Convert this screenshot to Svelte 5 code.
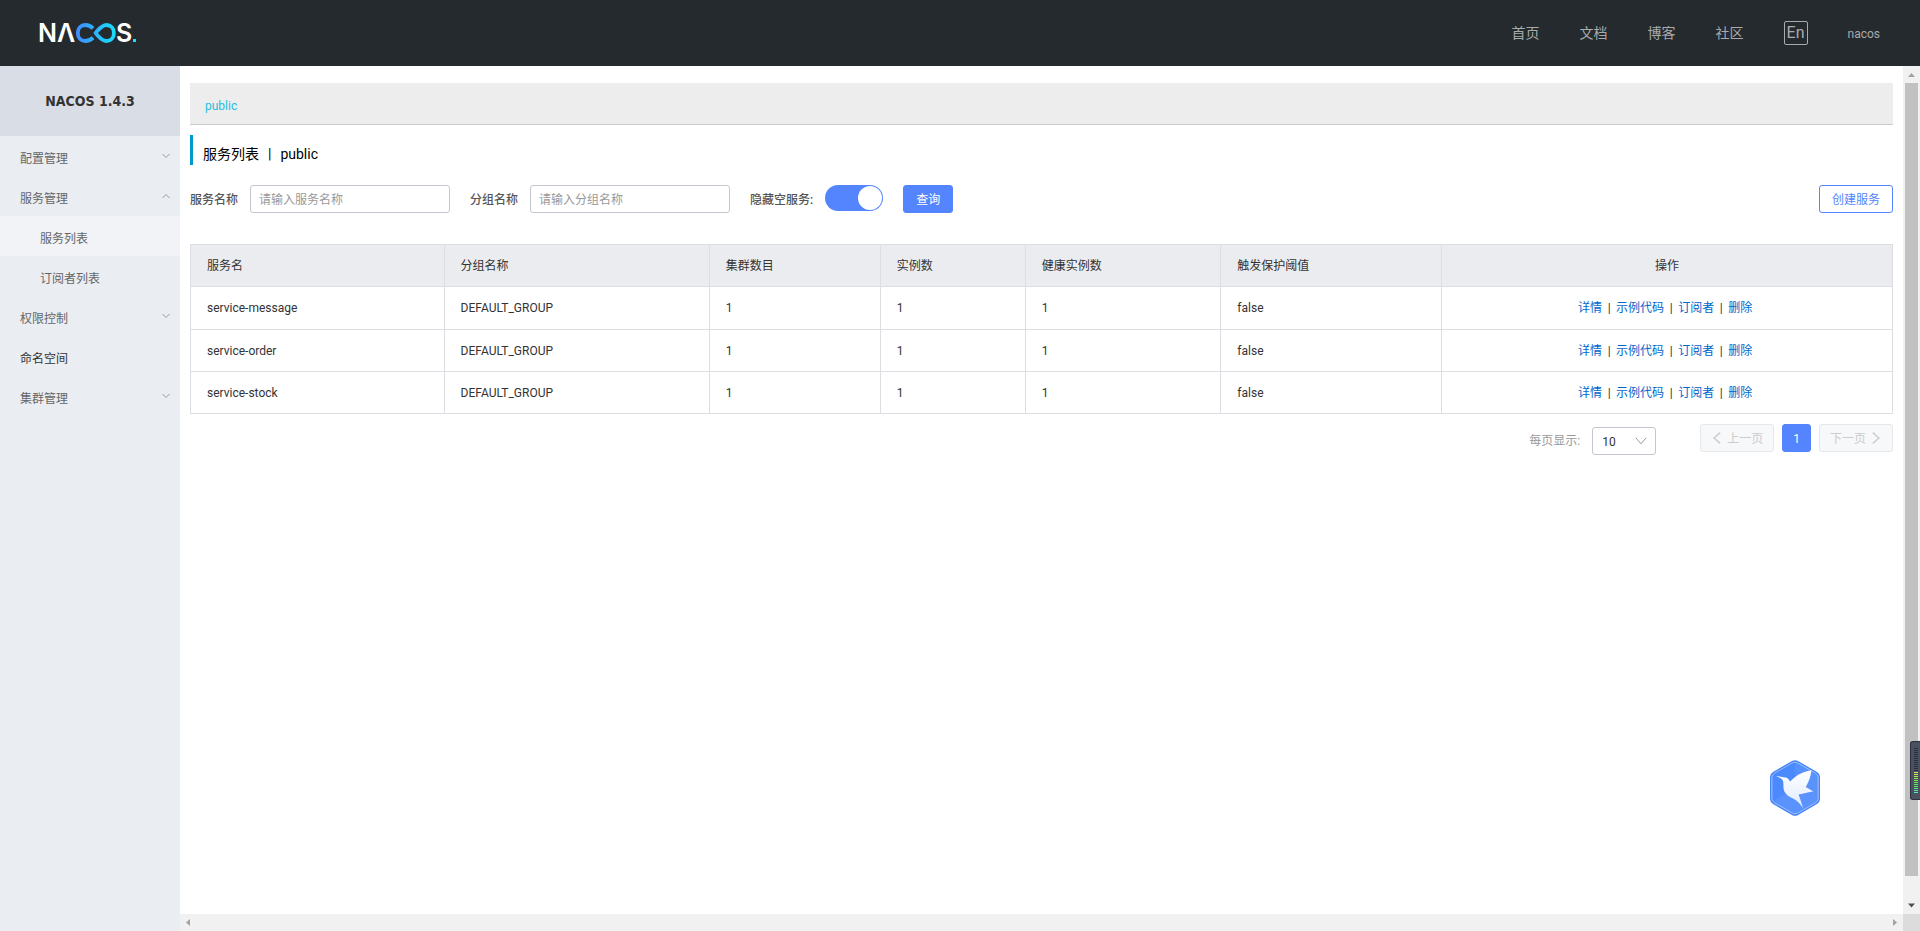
<script lang="ts">
  const nav = ['首页', '文档', '博客', '社区'];

  const menu = [
    { label: '配置管理', arrow: 'down' },
    { label: '服务管理', arrow: 'up' },
    { label: '服务列表', child: true, active: true },
    { label: '订阅者列表', child: true },
    { label: '权限控制', arrow: 'down' },
    { label: '命名空间', dark: true },
    { label: '集群管理', arrow: 'down' }
  ];

  const columns = [
    { label: '服务名', width: 14.9 },
    { label: '分组名称', width: 15.58 },
    { label: '集群数目', width: 10.04 },
    { label: '实例数', width: 8.52 },
    { label: '健康实例数', width: 11.5 },
    { label: '触发保护阈值', width: 12.98 },
    { label: '操作', width: 26.48 }
  ];

  const services = ['service-message', 'service-order', 'service-stock'].map((name) => ({
    name,
    cells: ['DEFAULT_GROUP', '1', '1', '1', 'false']
  }));

  const actions = ['详情', '示例代码', '订阅者', '删除'];
  const meter = Array.from({ length: 23 }, (_, i) => i);

  function meterColor(i: number) {
    if (i < 12) return '#2b3040';
    const hue = 64 + (i - 12) * 10;
    return `hsl(${hue} 78% 62%)`;
  }

  let serviceName = $state('');
  let groupName = $state('');
  let hideEmpty = $state(true);
  let pageSize = $state('10');
</script>

<div class="app">
  <header class="topbar">
    <a class="logo" href="#home" aria-label="NACOS">
      <svg width="108" height="40" viewBox="-4 -9 108 40">
        <defs>
          <linearGradient id="loop" gradientUnits="userSpaceOnUse" x1="36" y1="0" x2="76" y2="0">
            <stop offset="0" stop-color="#3f8cff" />
            <stop offset="1" stop-color="#16e0fa" />
          </linearGradient>
        </defs>
        <text class="mark" x="-2" y="20">N</text>
        <text class="mark" x="17" y="20">Λ</text>
        <g fill="none" stroke="url(#loop)" stroke-width="3.8">
          <path d="M53 6.400C51 4.200 48.300 3 45.200 3c-4.400 0-7.400 3.500-7.400 8s3 8 7.400 8c3.100 0 5.800-1.200 7.800-3.400" />
          <path d="M55.500 11c3.200-3.300 6-8 11-8 4.400 0 7.400 3.500 7.400 8s-3 8-7.400 8c-5 0-7.800-4.700-11-8z" stroke-linejoin="round" />
        </g>
        <text class="mark" x="76" y="20">S</text>
        <rect x="93" y="17" width="3" height="3" fill="#16e0fa" />
      </svg>
    </a>
    <nav>
      {#each nav as item}
        <a href="#nav">{item}</a>
      {/each}
      <button class="lang">En</button>
      <a class="user" href="#user">nacos</a>
    </nav>
  </header>

  <div class="body">
    <aside>
      <h1>NACOS 1.4.3</h1>
      <ul>
        {#each menu as item}
          <li>
            <a href="#menu" class:child={item.child} class:active={item.active} class:dark={item.dark}>
              <span>{item.label}</span>
              {#if item.arrow}
                <svg width="8" height="6" viewBox="0 0 8 6">
                  <path d={item.arrow === 'down' ? 'M.5 1 4 4.500 7.500 1' : 'M.5 5 4 1.500 7.500 5'} />
                </svg>
              {/if}
            </a>
          </li>
        {/each}
      </ul>
    </aside>

    <div class="pane">
      <main>
        <div class="namespace"><a href="#public">public</a></div>
        <h2>服务列表<span class="bar">|</span>public</h2>

        <form onsubmit={(e) => e.preventDefault()}>
          <label class="strong" for="service">服务名称</label>
          <input id="service" type="text" placeholder="请输入服务名称" bind:value={serviceName} />
          <label class="strong next" for="group">分组名称</label>
          <input id="group" type="text" placeholder="请输入分组名称" bind:value={groupName} />
          <label class="strong next" for="hide">隐藏空服务:</label>
          <input id="hide" class="switch" type="checkbox" role="switch" bind:checked={hideEmpty} />
          <button class="primary next">查询</button>
          <button class="outline" type="button">创建服务</button>
        </form>

        <table>
          <colgroup>
            {#each columns as col}
              <col style="width: {col.width}%" />
            {/each}
          </colgroup>
          <thead>
            <tr>
              {#each columns as col}
                <th>{col.label}</th>
              {/each}
            </tr>
          </thead>
          <tbody>
            {#each services as row}
              <tr>
                <td>{row.name}</td>
                {#each row.cells as cell}
                  <td>{cell}</td>
                {/each}
                <td>
                  <div class="actions">
                    {#each actions as action, i}
                      {#if i > 0}<span>|</span>{/if}
                      <a href="#action">{action}</a>
                    {/each}
                  </div>
                </td>
              </tr>
            {/each}
          </tbody>
        </table>

        <div class="paging">
          <label for="size">每页显示:</label>
          <div class="select">
            <select id="size" bind:value={pageSize}>
              <option>10</option>
              <option>20</option>
              <option>50</option>
            </select>
            <svg width="12" height="8" viewBox="0 0 12 8"><path d="M.8 .8 6 6.800 11.200 .8" /></svg>
          </div>
          <div class="pages">
            <button class="prev" disabled>
              <svg width="8" height="12" viewBox="0 0 8 12"><path d="M7.200 .6 1 6l6.200 5.400" /></svg>
              上一页
            </button>
            <button class="current">1</button>
            <button class="following" disabled>
              下一页
              <svg width="8" height="12" viewBox="0 0 8 12"><path d="M.8 .6 7 6 .8 11.400" /></svg>
            </button>
          </div>
        </div>
      </main>

      <div class="vscroll">
        <svg width="17" height="17" viewBox="0 0 17 17"><path d="M5 11 8.500 7 12 11z" fill="#a3a3a3" /></svg>
        <div class="thumb"></div>
        <svg width="17" height="17" viewBox="0 0 17 17"><path d="M5 6.500 8.500 10.500 12 6.500z" fill="#505050" /></svg>
      </div>
      <div class="hscroll">
        <svg width="17" height="17" viewBox="0 0 17 17"><path d="M10 5 6 8.500 10 12z" fill="#a3a3a3" /></svg>
        <svg width="17" height="17" viewBox="0 0 17 17"><path d="M7 5 11 8.500 7 12z" fill="#a3a3a3" /></svg>
      </div>
      <div class="corner"></div>
    </div>
  </div>

  <svg class="bird" width="50" height="56" viewBox="0 0 50 56">
    <defs>
      <linearGradient id="hex" x1="0" y1="0" x2="1" y2="1">
        <stop offset="0" stop-color="#4f90ff" />
        <stop offset="1" stop-color="#5f94fb" />
      </linearGradient>
      <linearGradient id="wing" x1="0" y1="0" x2="0" y2="1">
        <stop offset="0" stop-color="#fff" />
        <stop offset="1" stop-color="#dfeaff" />
      </linearGradient>
    </defs>
    <path d="M22 1a6 6 0 0 1 6 0l19 11a6 6 0 0 1 3 5v22a6 6 0 0 1-3 5L28 55a6 6 0 0 1-6 0L3 44a6 6 0 0 1-3-5V17a6 6 0 0 1 3-5z" fill="#4583fb" />
    <path d="M22.500 2.800a5 5 0 0 1 5 0l18.200 10.500a5 5 0 0 1 2.500 4.300v20.800a5 5 0 0 1-2.500 4.300L27.500 53.200a5 5 0 0 1-5 0L4.300 42.700a5 5 0 0 1-2.500-4.300V17.600a5 5 0 0 1 2.500-4.300z" fill="url(#hex)" stroke="#9fc2ff" stroke-width="1" />
    <path d="M25 3v25L3 41V17l1.500-3.500L22 3.400z" fill="#3f80fa" opacity=".4" />
    <path d="M25 28 4 41l20 12h3l20-12z" fill="#5b93ff" opacity=".6" />
    <path d="M6 16c3 .2 5 .9 7.500 1.200 3.500.2 5.300 1.300 6.500 4.300C25 17 31 11.500 41.500 10.300c-.7 6-2.700 11.700-5.700 16.700 2.200 1.200 4.400 2.800 7.700 4.300-4.200 1-9.200 2.200-15 3.200 1.600 4 3 8.300 4.500 13.700-3-4.400-5.500-7.400-9.500-9.400-5.500-2.500-9.500-5.500-10-10.500-.3-4.300.7-7.500-2.200-9.500-1.500-1-3.300-1.700-5.300-2.800z" fill="url(#wing)" />
  </svg>

  <div class="meter">
    {#each meter as i}
      <i style="background: {meterColor(i)}"></i>
    {/each}
  </div>
</div>

<style>
  :global(body) {
    margin: 0;
  }

  .app {
    display: flex;
    flex-direction: column;
    height: 100vh;
    overflow: hidden;
    background: #fff;
    color: #333;
    font: 12px/18px Roboto, 'Noto Sans CJK SC', sans-serif;
  }

  .app * {
    box-sizing: border-box;
  }

  a {
    color: inherit;
    text-decoration: none;
  }

  button,
  input,
  select {
    margin: 0;
    font: inherit;
  }

  svg {
    display: block;
    flex: none;
  }

  .topbar {
    display: flex;
    align-items: center;
    justify-content: space-between;
    flex: none;
    height: 66px;
    padding: 0 40px 0 36px;
    background: #252a2f;
  }

  .mark {
    fill: #fff;
    font: 600 25px Inter, sans-serif;
  }

  nav {
    display: flex;
    align-items: center;
    gap: 40px;
    color: #a8aaac;
    font-size: 14px;
  }

  .lang {
    width: 24px;
    height: 24px;
    padding: 0;
    border: 1px solid #a8aaac;
    border-radius: 2px;
    background: none;
    color: inherit;
    font-size: 16px;
    line-height: 20px;
  }

  .user {
    padding-top: 2px;
    font-size: 12px;
  }

  .body {
    display: flex;
    flex: 1;
    min-height: 0;
  }

  aside {
    flex: none;
    width: 180px;
    background: #eaedf2;
  }

  h1 {
    margin: 0;
    background: #d9dde5;
    font: bold 14px/70px 'DejaVu Sans Condensed', 'DejaVu Sans', sans-serif;
    text-align: center;
  }

  ul {
    margin: 0;
    padding: 0;
    list-style: none;
  }

  li a {
    display: flex;
    align-items: center;
    justify-content: space-between;
    height: 40px;
    padding: 6px 10px 0 20px;
    color: #666;
  }

  li svg {
    margin-bottom: 6px;
  }

  li path,
  .paging path {
    fill: none;
    stroke: #999;
  }

  .child {
    padding-left: 40px;
  }

  .active {
    background: #f1f3f7;
  }

  .dark {
    color: #333;
  }

  .pane {
    display: grid;
    grid-template: 1fr 17px / 1fr 17px;
    flex: 1;
    min-width: 0;
  }

  main {
    min-width: 0;
    padding: 17px 10px 0;
  }

  .namespace {
    height: 42px;
    padding: 0 15px;
    border-bottom: 1px solid #ccc;
    background: #ededed;
    color: #1fbfdf;
    line-height: 46px;
  }

  h2 {
    height: 30px;
    margin: 10px 0 20px;
    padding-left: 10px;
    border-left: 3px solid #09c;
    color: #000;
    font-size: 14px;
    font-weight: 400;
    line-height: 38px;
  }

  .bar {
    margin: 0 9px;
  }

  form {
    display: flex;
    align-items: center;
    gap: 12px;
    height: 28px;
    margin-bottom: 31px;
  }

  .strong {
    padding-top: 2px;
    color: #555;
    font-weight: 500;
  }

  .next {
    margin-left: 8px;
  }

  input[type='text'] {
    width: 200px;
    height: 28px;
    padding: 2px 8px 0;
    border: 1px solid #c4c6cf;
    border-radius: 3px;
    outline: none;
    color: #333;
  }

  input::placeholder {
    color: #999;
  }

  .switch {
    appearance: none;
    width: 58px;
    height: 26px;
    margin-bottom: 2px;
    border-radius: 13px;
    background: #ccc;
  }

  .switch::before {
    content: '';
    display: block;
    width: 24px;
    height: 24px;
    margin: 1px;
    border-radius: 50%;
    background: #fff;
  }

  .switch:checked {
    background: #5584ff;
  }

  .switch:checked::before {
    margin-left: 33px;
  }

  button.primary,
  button.outline {
    height: 28px;
    padding: 2px 12px 0;
    border: 1px solid #5584ff;
    border-radius: 3px;
  }

  .primary {
    background: #5584ff;
    color: #fff;
  }

  .outline {
    margin-left: auto;
    background: #fff;
    color: #5584ff;
  }

  table {
    width: 100%;
    table-layout: fixed;
    border-collapse: collapse;
  }

  th,
  td {
    height: 42px;
    padding: 0 16px;
    border: 1px solid #dcdee3;
    font-weight: 400;
    text-align: left;
  }

  tbody tr:first-child td {
    height: 43px;
  }

  th {
    background: #ebecf0;
  }

  th:last-child {
    text-align: center;
  }

  .actions {
    display: flex;
    justify-content: center;
    padding-right: 4px;
  }

  .actions span {
    width: 14px;
    text-align: center;
  }

  .actions a {
    color: #06c;
  }

  .paging {
    display: flex;
    justify-content: flex-end;
    padding-top: 10px;
    color: #999;
  }

  .paging label {
    padding-top: 8px;
  }

  .select {
    display: grid;
    align-items: center;
    justify-items: end;
    width: 64px;
    height: 28px;
    margin: 3px 44px 0 12px;
    border: 1px solid #c4c6cf;
    border-radius: 3px;
  }

  select {
    grid-area: 1 / 1;
    appearance: none;
    width: 100%;
    height: 26px;
    padding: 2px 9px 0;
    border: 0;
    background: none;
    color: #333;
  }

  .select svg {
    grid-area: 1 / 1;
    margin-right: 8px;
    pointer-events: none;
  }

  .pages {
    display: flex;
    gap: 8px;
  }

  .pages button {
    display: flex;
    align-items: center;
    gap: 6px;
    height: 28px;
    padding: 2px 10px 0;
    border: 1px solid #e6e7eb;
    border-radius: 3px;
    background: #f7f8fa;
    color: #ccc;
  }

  .pages button.prev {
    padding-left: 12px;
  }

  .pages button.following {
    padding-right: 12px;
  }

  .pages svg {
    margin-bottom: 2px;
  }

  .pages path {
    stroke: #ccc;
    stroke-width: 1.4;
  }

  .pages button.current {
    border-color: #5584ff;
    background: #5584ff;
    color: #fff;
  }

  .vscroll,
  .hscroll {
    display: flex;
    justify-content: space-between;
    background: #f1f1f1;
  }

  .vscroll {
    flex-direction: column;
  }

  .thumb {
    flex: 1;
    margin: 0 2px 21px;
    background: #c1c1c1;
  }

  .corner {
    background: #dcdcdc;
  }

  .bird {
    position: absolute;
    right: 100px;
    bottom: 115px;
  }

  .meter {
    position: absolute;
    right: 0;
    bottom: 131px;
    display: flex;
    flex-direction: column;
    gap: 1px;
    width: 10px;
    height: 59px;
    padding: 6px 2px 0 3px;
    border: 1px solid #2b3040;
    border-right: 0;
    border-radius: 3px 0 0 3px;
    background: #4a5060;
  }

  .meter i {
    flex: none;
    height: 1px;
  }
</style>
